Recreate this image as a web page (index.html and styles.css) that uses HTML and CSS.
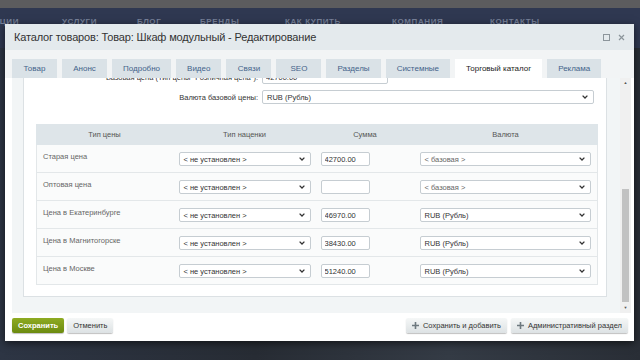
FILE: index.html
```html
<!DOCTYPE html>
<html lang="ru">
<head>
    <meta charset="UTF-8">
    <meta name="viewport" content="width=device-width, initial-scale=1.0">
    <title>Каталог товаров: Товар: Шкаф модульный - Редактирование</title>
    <link rel="stylesheet" href="styles.css">
</head>
<body>
    <div class="site">
        <div class="site-top"></div>
        <nav class="site-nav">
            <span class="nav-first">Акции</span>
            <span>Услуги</span>
            <span>Блог</span>
            <span>Бренды</span>
            <span>Как купить</span>
            <span>Компания</span>
            <span>Контакты</span>
        </nav>
        <div class="site-body"></div>
    </div>

    <div class="dialog">
        <div class="dialog-head">
            <div class="dialog-title">Каталог товаров: Товар: Шкаф модульный - Редактирование</div>
            <div class="dialog-icons">
                <svg width="7" height="7" viewBox="0 0 7 7"><rect x="0.5" y="0.5" width="6" height="6" fill="none" stroke="#8c959b"/></svg>
                <svg width="7" height="7" viewBox="0 0 7 7"><path d="M1 1l5 5M6 1l-5 5" stroke="#8c959b" stroke-width="1.2"/></svg>
            </div>
        </div>

        <div class="tabs">
            <div class="tab">Товар</div>
            <div class="tab">Анонс</div>
            <div class="tab">Подробно</div>
            <div class="tab">Видео</div>
            <div class="tab">Связи</div>
            <div class="tab">SEO</div>
            <div class="tab">Разделы</div>
            <div class="tab">Системные</div>
            <div class="tab active">Торговый каталог</div>
            <div class="tab">Реклама</div>
        </div>

        <div class="dialog-body">
            <div class="scroll-view">
                <div class="form-panel">
                    <div class="field-row">
                        <label>Базовая цена (Тип цены "Розничная цена"):</label>
                        <input class="text-input wide" type="text" value="42700.00">
                    </div>
                    <div class="field-row">
                        <label>Валюта базовой цены:</label>
                        <div class="select currency-main">RUB (Рубль)<svg width="6" height="4" viewBox="0 0 6 4"><path d="M0.6 0.6L3 3L5.4 0.6" fill="none" stroke="#333" stroke-width="1.3"/></svg></div>
                    </div>

                    <table class="price-table">
                        <colgroup>
                            <col class="c-type">
                            <col class="c-markup">
                            <col class="c-sum">
                            <col class="c-currency">
                        </colgroup>
                        <thead>
                            <tr>
                                <th>Тип цены</th>
                                <th>Тип наценки</th>
                                <th>Сумма</th>
                                <th>Валюта</th>
                            </tr>
                        </thead>
                        <tbody id="prices"></tbody>
                    </table>
                </div>
            </div>
            <div class="scrollbar">
                <div class="sb-arrow">&#9650;</div>
                <div class="sb-track"><div class="sb-thumb"></div></div>
                <div class="sb-arrow">&#9660;</div>
            </div>
        </div>

        <div class="dialog-foot">
            <button class="btn btn-save">Сохранить</button>
            <button class="btn">Отменить</button>
            <div class="foot-right">
                <button class="btn btn-plus"><svg width="7" height="7" viewBox="0 0 7 7"><path d="M3.5 0v7M0 3.5h7" stroke="#6e797f" stroke-width="1.6"/></svg>Сохранить и добавить</button>
                <button class="btn btn-plus"><svg width="7" height="7" viewBox="0 0 7 7"><path d="M3.5 0v7M0 3.5h7" stroke="#6e797f" stroke-width="1.6"/></svg>Административный раздел</button>
            </div>
        </div>
    </div>

    <script>
        const rows = [
            { name: 'Старая цена', sum: '42700.00', currency: '< базовая >', muted: true },
            { name: 'Оптовая цена', sum: '', currency: '< базовая >', muted: true },
            { name: 'Цена в Екатеринбурге', sum: '46970.00', currency: 'RUB (Рубль)' },
            { name: 'Цена в Магнитогорске', sum: '38430.00', currency: 'RUB (Рубль)' },
            { name: 'Цена в Москве', sum: '51240.00', currency: 'RUB (Рубль)' }
        ];

        const chevron = '<svg width="6" height="4" viewBox="0 0 6 4"><path d="M0.6 0.6L3 3L5.4 0.6" fill="none" stroke="#333" stroke-width="1.3"/></svg>';
        const body = document.getElementById('prices');

        rows.forEach(r => {
            const tr = document.createElement('tr');
            tr.innerHTML = `
                <td class="name">${r.name}</td>
                <td><div class="select">&lt; не установлен &gt;${chevron}</div></td>
                <td class="sum"><input class="text-input short" type="text" value="${r.sum}"></td>
                <td><div class="select${r.muted ? ' muted' : ''}">${r.currency.replace('<', '&lt;').replace('>', '&gt;')}${chevron}</div></td>`;
            body.appendChild(tr);
        });
    </script>
</body>
</html>
```

FILE: styles.css
```css
* {
    box-sizing: border-box;
}

body {
    margin: 0;
    font-family: "Liberation Sans", Arial, sans-serif;
    background: #2b313b;
    overflow: hidden;
}

/* page behind the dialog */
.site {
    height: 360px;
    display: flex;
    flex-direction: column;
}

.site-top {
    height: 8px;
    background: #5c5c5e;
}

.site-nav {
    height: 40px;
    background: #2f3851;
    display: grid;
    grid-template-columns: 76px 75px 63px 85px 107px 98px 1fr;
    padding-top: 9px;
    margin-left: -14px;
    font-size: 8px;
    font-weight: bold;
    letter-spacing: 0.6px;
    text-transform: uppercase;
    color: #78829a;
}

.nav-first {
    padding-left: 2px;
}

.site-body {
    flex: 1;
    background: linear-gradient(90deg, #2d3544, #272c34 40%, #343b45 70%, #292e36);
}

/* dialog */
.dialog {
    position: absolute;
    left: 5px;
    top: 24px;
    width: 629px;
    height: 317px;
    background: #fff;
    box-shadow: 0 2px 8px rgba(0, 0, 0, 0.6);
    display: flex;
    flex-direction: column;
}

.dialog-head {
    height: 26px;
    flex-shrink: 0;
    background: #e4eaed;
    display: flex;
    align-items: center;
    justify-content: space-between;
    padding: 0 9px 0 9px;
}

.dialog-title {
    font-size: 11px;
    letter-spacing: -0.15px;
    color: #333;
}

.dialog-icons {
    display: flex;
    align-items: center;
    gap: 8px;
}

.dialog-icons svg {
    display: block;
}

.tabs {
    height: 28px;
    flex-shrink: 0;
    background: #f2f4f5;
    display: flex;
    gap: 5px;
    padding: 9px 0 0 7px;
}

.tab {
    height: 19px;
    line-height: 19px;
    min-width: 45px;
    padding: 0 11px;
    background: #dae2e7;
    color: #43638a;
    font-size: 8px;
    text-align: center;
}

.tab.active {
    background: #fff;
    color: #222;
}

.dialog-body {
    flex: 1;
    min-height: 0;
    display: flex;
    padding: 0 3px 0 7px;
}

.scroll-view {
    flex: 1;
    overflow: hidden;
    background: #f2f5f6;
    display: flex;
    flex-direction: column;
    justify-content: flex-end;
    padding: 0 13px 16px 11px;
}

.form-panel {
    flex-shrink: 0;
    background: #fff;
    border: 1px solid #dce1e4;
    padding: 10px 9px 11px 12px;
}

.field-row {
    display: grid;
    grid-template-columns: 222px 1fr;
    column-gap: 4px;
    align-items: center;
    height: 20px;
    font-size: 7.5px;
    color: #333;
}

.field-row label {
    text-align: right;
}

.field-row:last-of-type {
    margin-bottom: 17px;
}

.text-input {
    height: 14px;
    border: 1px solid #c6cdd2;
    border-radius: 2px;
    padding: 0 3px;
    font: 7.5px "Liberation Sans", Arial, sans-serif;
    color: #333;
    background: #fff;
    outline: none;
}

.text-input.wide {
    width: 126px;
}

.text-input.short {
    width: 49px;
}

.select {
    height: 14px;
    border: 1px solid #c6cdd2;
    border-radius: 2px;
    background: #fff;
    padding: 0 5px 0 4px;
    font-size: 7.5px;
    color: #333;
    display: flex;
    align-items: center;
    justify-content: space-between;
    white-space: nowrap;
}

.select.muted {
    color: #666;
}

.select svg {
    display: block;
}

.currency-main {
    width: 332px;
}

/* price table */
.price-table {
    width: 100%;
    table-layout: fixed;
    border-collapse: collapse;
    font-size: 7.5px;
}

.c-type { width: 136px; }
.c-markup { width: 144px; }
.c-sum { width: 97px; }
.c-currency { width: 184px; }

.price-table th {
    height: 20px;
    background: #dee5e9;
    color: #555;
    font-weight: normal;
    border: 1px solid #dee5e9;
}

.price-table td {
    height: 28px;
    vertical-align: top;
    padding: 7px 6px 0 6px;
    background: #fafbfb;
    border: 1px solid #e3e7e9;
    border-left: none;
    border-right: none;
}

.price-table tr td:first-child {
    border-left: 1px solid #e3e7e9;
}

.price-table tr td:last-child {
    border-right: 1px solid #e3e7e9;
}

.price-table td.name {
    color: #666;
    line-height: 9px;
}

.price-table td.sum {
    padding-left: 4px;
}

/* scrollbar */
.scrollbar {
    width: 11px;
    background: #f0f0f0;
    display: flex;
    flex-direction: column;
    align-items: center;
}

.sb-arrow {
    height: 10px;
    line-height: 10px;
    font-size: 4px;
    color: #555;
}

.sb-track {
    flex: 1;
    width: 100%;
    display: flex;
    flex-direction: column;
    justify-content: flex-end;
    padding: 0 2px 1px 2px;
}

.sb-thumb {
    height: 113px;
    background: #c2c2c2;
}

/* footer */
.dialog-foot {
    height: 28px;
    flex-shrink: 0;
    display: flex;
    align-items: flex-start;
    gap: 3px;
    padding: 5px 6px 0 7px;
}

.foot-right {
    margin-left: auto;
    display: flex;
    gap: 4px;
}

.btn {
    height: 15px;
    padding: 0 6px;
    border: none;
    border-radius: 2px;
    font: 7.5px "Liberation Sans", Arial, sans-serif;
    color: #333;
    background: linear-gradient(#f5f7f7, #dde2e4);
    box-shadow: 0 1px 1px rgba(0, 0, 0, 0.25);
    display: flex;
    align-items: center;
    gap: 4px;
}

.btn-save {
    background: linear-gradient(#8eab22, #6b8a0f);
    color: #fff;
    font-weight: bold;
}
```
